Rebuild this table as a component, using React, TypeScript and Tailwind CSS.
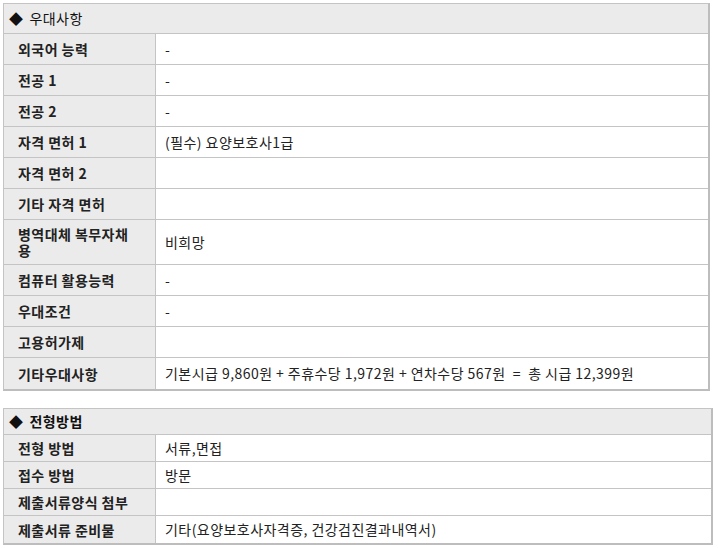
import React from "react";

type Row = { label: string; value: string; tall?: boolean };

const benefitRows: Row[] = [
  { label: "외국어 능력", value: "-" },
  { label: "전공 1", value: "-" },
  { label: "전공 2", value: "-" },
  { label: "자격 면허 1", value: "(필수) 요양보호사1급" },
  { label: "자격 면허 2", value: "" },
  { label: "기타 자격 면허", value: "" },
  { label: "병역대체 복무자채용", value: "비희망", tall: true },
  { label: "컴퓨터 활용능력", value: "-" },
  { label: "우대조건", value: "-" },
  { label: "고용허가제", value: "" },
  { label: "기타우대사항", value: "기본시급 9,860원 + 주휴수당 1,972원 + 연차수당 567원  =  총 시급 12,399원" },
];

const selectionRows: Row[] = [
  { label: "전형 방법", value: "서류,면접" },
  { label: "접수 방법", value: "방문" },
  { label: "제출서류양식 첨부", value: "" },
  { label: "제출서류 준비물", value: "기타(요양보호사자격증, 건강검진결과내역서)" },
];

const InfoTable: React.FC<{
  title: string;
  rows: Row[];
  rowH: string;
  headH: string;
  width: string;
  titleBold?: boolean;
}> = ({ title, rows, rowH, headH, width, titleBold }) => {
  return (
    <div className={`${width} border border-[#c4c4c4] border-r-2 border-b-2 border-r-[#bdbdbd] border-b-[#bdbdbd]`}>
      {/* section title */}
      <div
        className={`${headH} bg-[#ebebeb] flex items-center pl-[5px] border-b border-[#c4c4c4] text-[14px] text-[#111] ${
          titleBold ? "font-semibold" : ""
        }`}
      >
        <span className="text-[14px] mr-[6px]">◆</span>
        {title}
      </div>
      {rows.map((r, i) => (
        <div
          key={r.label}
          className={`grid grid-cols-[152px_1fr] ${r.tall ? "h-[45px]" : rowH} ${
            i < rows.length - 1 ? "border-b border-[#c4c4c4]" : ""
          }`}
        >
          <div className="bg-[#ebebeb] border-r border-[#c4c4c4] flex items-center pl-[14px] pr-[16px] font-bold text-[14px] leading-[16px] text-[#222]">
            {r.label}
          </div>
          <div className="flex items-center pl-[9px] text-[14px] text-[#222] whitespace-pre">{r.value}</div>
        </div>
      ))}
    </div>
  );
};

export default function App() {
  return (
    <div className="w-[718px] h-[548px] bg-white overflow-hidden pt-[3px] pl-[3px] tracking-[0.45px] font-['Noto_Sans_CJK_KR',sans-serif]">
      <InfoTable title="우대사항" rows={benefitRows} rowH="h-[31px]" headH="h-[30px]" width="w-[707px]" />
      <div className="h-[17px]" />
      <InfoTable
        title="전형방법"
        rows={selectionRows}
        rowH="h-[27px]"
        headH="h-[26px]"
        width="w-[710px]"
        titleBold
      />
    </div>
  );
}
